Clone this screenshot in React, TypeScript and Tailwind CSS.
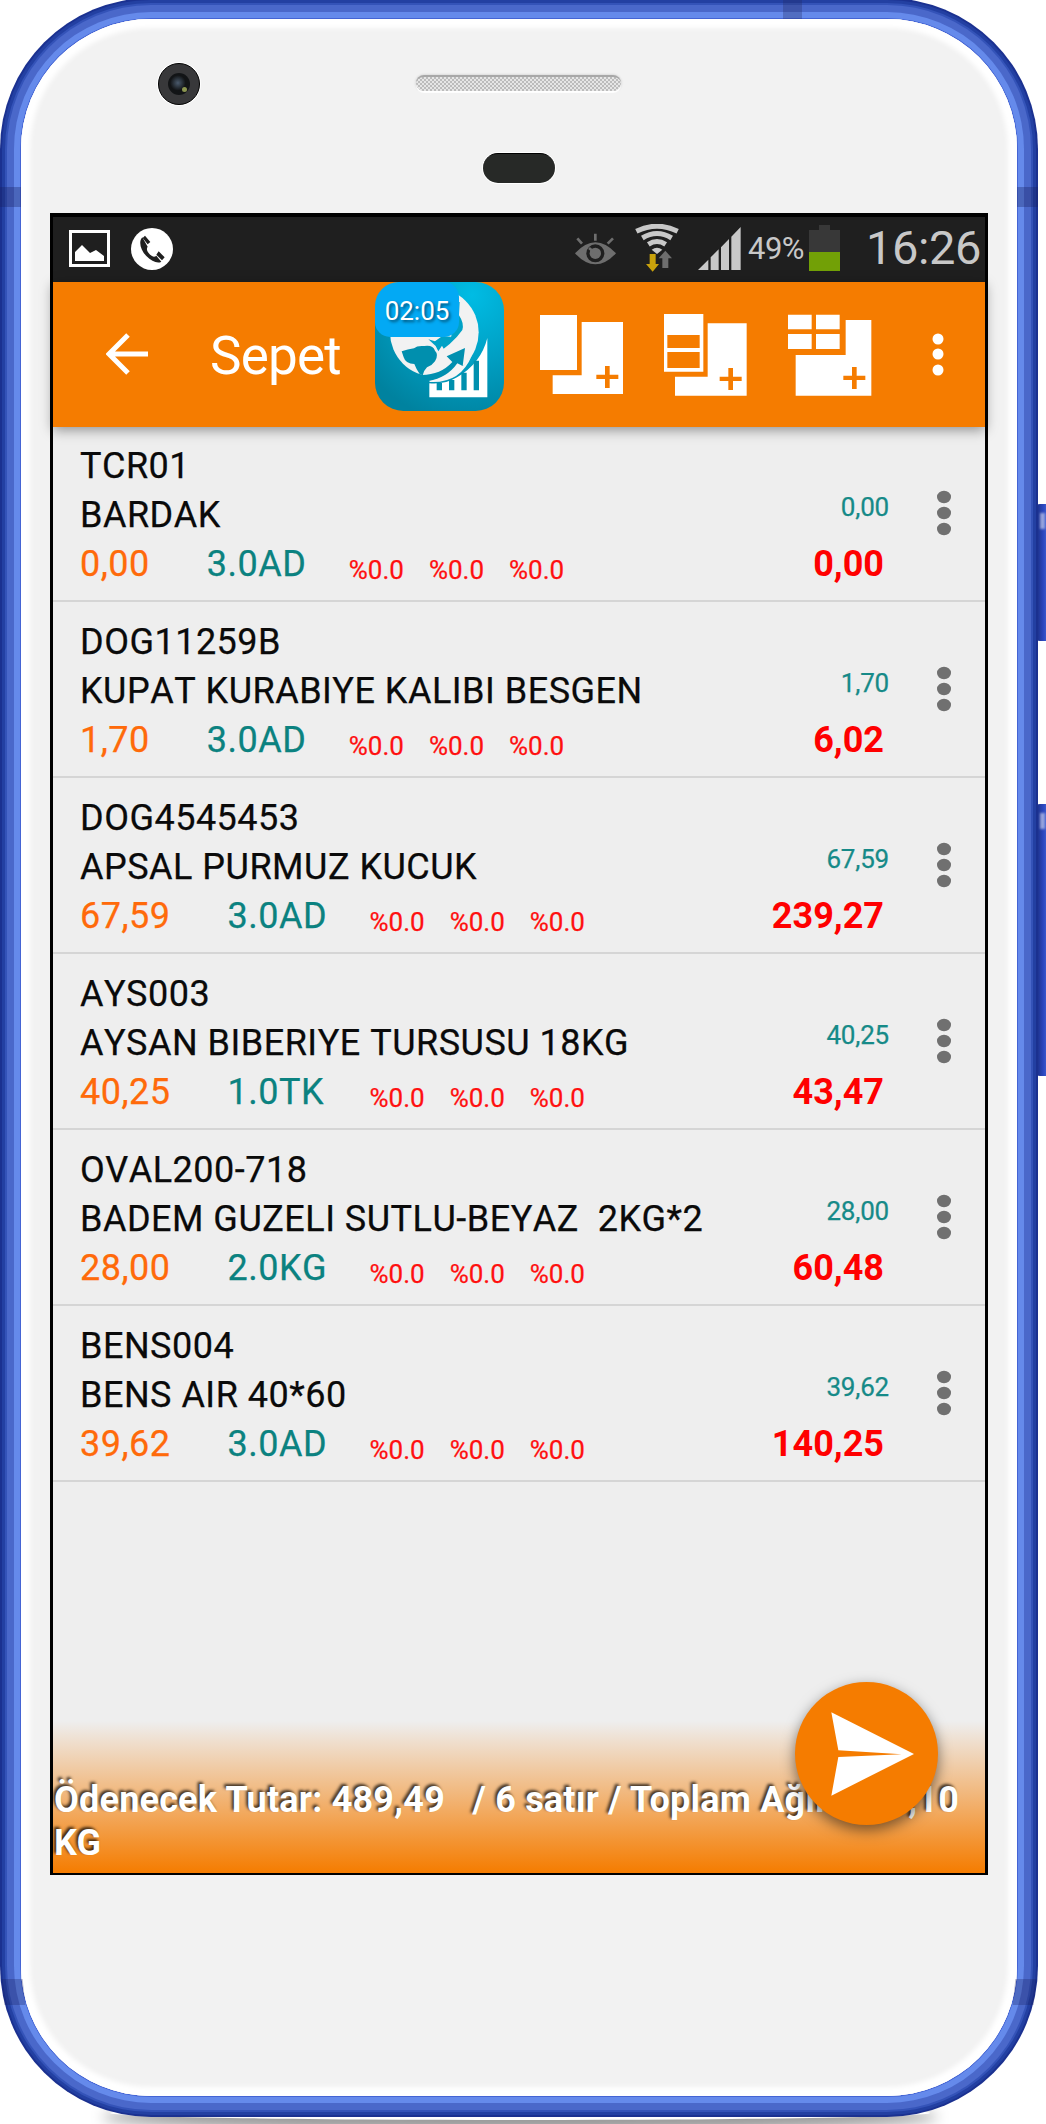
const items = [
  { code: "TCR01", name: "BARDAK", price: "0,00", qty: "3.0AD", unit: "0,00", total: "0,00" },
  { code: "DOG11259B", name: "KUPAT KURABIYE KALIBI BESGEN", price: "1,70", qty: "3.0AD", unit: "1,70", total: "6,02" },
  { code: "DOG4545453", name: "APSAL PURMUZ KUCUK", price: "67,59", qty: "3.0AD", unit: "67,59", total: "239,27" },
  { code: "AYS003", name: "AYSAN BIBERIYE TURSUSU 18KG", price: "40,25", qty: "1.0TK", unit: "40,25", total: "43,47" },
  { code: "OVAL200-718", name: "BADEM GUZELI SUTLU-BEYAZ  2KG*2", price: "28,00", qty: "2.0KG", unit: "28,00", total: "60,48" },
  { code: "BENS004", name: "BENS AIR 40*60", price: "39,62", qty: "3.0AD", unit: "39,62", total: "140,25" },
];

const StatusBar = () => (
  <div className="h-[65px] shrink-0 bg-[#1f1f1f] flex items-center pb-[3px] pl-[16px] pr-[7px] text-[#c8c8c8]">
    <svg className="w-[41px] h-[37px] mt-[1px]" viewBox="0 0 41 37">
      <rect x="1.5" y="1.5" width="38" height="34" fill="none" stroke="#fff" strokeWidth="3" />
      <path d="M6 31V22L13 15L21 23L27 20L35 26V31Z" fill="#fff" />
    </svg>
    <svg className="w-[42px] h-[42px] ml-[21px] mt-[1px]" viewBox="0 0 126 126">
      <circle cx="63" cy="63" r="63" fill="#fff" />
      <path d="M34 28C22 40 28 66 46 84C62 100 80 108 91 101L76 83C71 88 65 88 56 79C47 69 46 62 50 56Z" fill="#1f1f1f" />
      <path d="M42 23L58 42L50 49L35 30ZM83 70L101 88L93 97L76 80Z" fill="#1f1f1f" />
    </svg>
    <svg className="w-[41px] h-[32px] ml-auto mt-[2px]" viewBox="0 0 123 94">
      <path d="M0 60Q61 -6 123 60Q61 126 0 60Z" fill="#6e6e6e" />
      <circle cx="61" cy="60" r="27" fill="#1f1f1f" />
      <circle cx="61" cy="60" r="17" fill="#6e6e6e" />
      <path d="M61 60L42 44M61 1V22M7 15L21 31M114 15L98 31" stroke="#6e6e6e" strokeWidth="8" />
    </svg>
    <svg className="w-[44px] h-[48px] ml-[19px]" viewBox="0 0 132 144">
      <g fill="none" stroke="#c8c8c8" strokeWidth="15">
        <path d="M4 22Q66 -9 128 22" />
        <path d="M22 42Q66 15 110 42" />
        <path d="M40 61Q66 44 92 61" />
      </g>
      <path d="M50 77Q66 66 82 77L66 90Z" fill="#c8c8c8" />
      <path d="M44 90H62V120H72L53 143L33 120H44Z" fill="#c9a20c" />
      <path d="M82 132H100V103H111L91 80L71 103H82Z" fill="#6e6e6e" />
    </svg>
    <svg className="w-[43px] h-[43px] ml-[19px]" viewBox="0 0 129 129">
      <path d="M0 129L31 98V129ZM38 129V91L62 67V129ZM69 129V61L93 36V129ZM100 129V29L128 0V129Z" fill="#c8c8c8" />
    </svg>
    <span className="text-[31px] leading-none ml-[7px] w-[56px] tracking-[-0.5px]">49%</span>
    <svg className="w-[31px] h-[46px] ml-[5px]" viewBox="0 0 31 46">
      <path d="M0 5H10V0H21V5H31V27H0Z" fill="#383838" />
      <rect y="27" width="31" height="19" fill="#72a006" />
    </svg>
    <span className="text-[47px] leading-none ml-[26px] mt-[-1px] w-[112px] tracking-[-0.4px]">16:26</span>
  </div>
);

const AppIcon = () => (
  <svg className="w-[129px] h-[129px]" viewBox="0 0 387 387">
    <defs>
      <radialGradient id="tile" cx="0.75" cy="0.1" r="1">
        <stop offset="0" stopColor="#00bce4" />
        <stop offset="0.5" stopColor="#00a0c4" />
        <stop offset="1" stopColor="#00829f" />
      </radialGradient>
    </defs>
    <rect width="387" height="387" rx="85" fill="url(#tile)" />
    <circle cx="178" cy="151" r="133" fill="#f2f2f2" />
    <path d="M80 208Q98 202 117 199Q126 190 148 192Q174 188 180 206Q192 218 180 238Q172 250 156 256Q146 266 143 280L134 276Q124 262 118 246Q92 246 86 226Z" fill="#008fae" />
    <path d="M160 172L180 178L202 162L228 164L222 182L202 190L190 208L182 192ZM250 60H254L252 100Q268 124 262 144L246 164L224 186L206 200L200 190L228 166Z" fill="#00a2c6" />
    <path d="M160 296Q218 284 248 244L264 252L290 222Q256 304 166 300Z" fill="#f5f5f5" />
    <path d="M125 278Q192 284 232 240L215 223L270 198L263 252L247 244Q216 288 160 297Z" fill="#0090b0" />
    <path d="M163 346V304Q210 308 246 286Q318 244 337 168V346Z" fill="#fff" />
    <path d="M185 325V303H201V325ZM222 325V294H238V325ZM259 325V272H275V325ZM296 325V236H312V325Z" fill="#0090ae" />
  </svg>
);

const plus = "h26v-26h14v26h26v13h-26v27h-14v-27h-26z";

const AppBar = () => (
  <div className="relative z-10 h-[145px] shrink-0 bg-[#f57c00] text-white flex items-start pl-[53px] shadow-[0_3px_12px_rgba(0,0,0,0.4)]">
    <svg className="w-[42px] h-[42px] mt-[51px]" viewBox="0 0 42 42" fill="none" stroke="#fff" strokeWidth="5">
      <path d="M22 2L3 21L22 40M3 21H42" />
    </svg>
    <span className="text-[53px] leading-[62px] mt-[43px] ml-[62px] w-[132px] tracking-[-0.8px]">Sepet</span>
    <div className="relative ml-[33px]">
      <AppIcon />
      <span className="absolute left-0 top-0 w-[84px] h-[55px] rounded-[15px] rounded-tl-[24px] bg-[#03a9f4] text-[26px] leading-[58px] text-center [text-shadow:2px_2px_3px_rgba(0,0,0,0.5)]">
        02:05
      </span>
    </div>
    <svg className="w-[83px] h-[79px] mt-[33px] ml-[36px]" viewBox="30 329 249 237" fill="#fff">
      <path d="M30 329H141V494H30ZM155 350H279V566H68V510H155Z" />
      <path d={`M199 508${plus}`} fill="#f57c00" />
    </svg>
    <svg className="w-[83px] h-[82px] mt-[32px] ml-[41px]" viewBox="403 325 249 246" fill="#fff">
      <path d="M403 325H521V498H403ZM534 353H651V570H436V513H534Z" />
      <path d={`M413 388H510V427H413ZM413 439H510V487H413ZM570 513${plus}`} fill="#f57c00" />
    </svg>
    <svg className="w-[84px] h-[82px] mt-[32px] ml-[41px]" viewBox="775 325 252 246" fill="#fff">
      <path d="M775 327H846V371H775ZM859 327H930V371H859ZM775 385H846V430H775ZM859 385H930V430H859ZM948 343H1025V570H798V448H948Z" />
      <path d={`M941 510${plus}`} fill="#f57c00" />
    </svg>
    <svg className="w-[12px] h-[44px] mt-[50px] ml-[60px]" viewBox="0 0 12 44" fill="#fff">
      <circle cx="6" cy="7" r="5.5" />
      <circle cx="6" cy="22" r="5.5" />
      <circle cx="6" cy="38" r="5.5" />
    </svg>
  </div>
);

const CartRow = ({ item }: { item: (typeof items)[number] }) => (
  <li className="h-[176px] flex pt-[16px] pl-[27px] pr-[34px] border-b-2 border-[#d5d5d5] text-[36px] leading-[49px] [font-kerning:none]">
    <div className="flex-1 text-[#0a0a0a] whitespace-pre tracking-[0.5px] [-webkit-text-stroke:0.25px]">
      <p>{item.code}</p>
      <p>{item.name}</p>
      <div className="flex items-baseline">
        <span className="text-[#ff6a0a]">{item.price}</span>
        <span className="text-[#0b8280] ml-[57px] w-[142px]">{item.qty}</span>
        <span className="flex gap-[25px] text-[26px] text-[#ff1010] tracking-normal translate-y-[3px]">
          <span>%0.0</span>
          <span>%0.0</span>
          <span>%0.0</span>
        </span>
      </div>
    </div>
    <div className="flex flex-col items-end pt-[41px]">
      <span className="text-[26px] leading-[48px] text-[#168a88] tracking-[-0.2px] [-webkit-text-stroke:0.25px]">{item.unit}</span>
      <span className="font-bold text-[#ff0000] leading-[49px] mt-[9px] mr-[5px]">{item.total}</span>
    </div>
    <svg className="w-[14px] h-[46px] ml-[48px] mt-[48px]" viewBox="0 0 14 46" fill="#707070">
      <ellipse cx="7" cy="7" rx="7" ry="6.2" />
      <ellipse cx="7" cy="23" rx="7" ry="6.2" />
      <ellipse cx="7" cy="39" rx="7" ry="6.2" />
    </svg>
  </li>
);

const Screen = () => (
  <div className="relative w-[938px] h-[1662px] ml-[29px] border-[3px] border-t-4 border-b-2 border-black bg-[#eeeeee] flex flex-col">
    <StatusBar />
    <AppBar />
    <ul className="-mt-px">
      {items.map((item) => (
        <CartRow key={item.code} item={item} />
      ))}
    </ul>
    <div className="mt-auto h-[152px] pt-[58px] pl-px bg-linear-to-b from-[#f57c00]/0 to-[#f57c00] text-white font-bold text-[36px] leading-[43px] tracking-[0.2px] whitespace-pre-wrap [text-shadow:-2px_-2px_3px_rgba(0,0,0,0.75)]">
      Ödenecek Tutar: 489,49   / 6 satır / Toplam Ağırlık: 4,10 KG
    </div>
    <button className="absolute right-[47px] bottom-[48px] w-[143px] h-[143px] rounded-full bg-[#f57c00] shadow-[0_5px_14px_rgba(0,0,0,0.5)]">
      <svg className="w-[143px] h-[143px]" viewBox="0 0 429 429" fill="#fff">
        <path d="M109 91L357 216L109 341L130 225L320 217L130 205Z" />
      </svg>
    </button>
  </div>
);

const App = () => {
  return (
    <div
      className="relative w-[1046px] h-[2124px] overflow-hidden bg-white pt-[19px] pl-[21px]"
      style={{ fontFamily: 'Roboto, "Noto Sans", sans-serif' }}
    >
      {/* ground shadow and side buttons */}
      <div className="absolute left-[110px] top-[2106px] w-[820px] h-[14px] rounded-[50%] shadow-[0_4px_14px_8px_rgba(0,0,0,0.4)]" />
      <div className="absolute left-[1036px] top-[504px] w-[14px] h-[137px] rounded bg-linear-to-r from-[#1b2f80] via-[#2a45bd] to-[#4e6fe0]">
        <div className="w-[5px] h-[16px] mt-[9px] ml-[4px] bg-white/50 blur-[1px]" />
      </div>
      <div className="absolute left-[1036px] top-[804px] w-[14px] h-[272px] rounded bg-linear-to-r from-[#1b2f80] via-[#2a45bd] to-[#4e6fe0]">
        <div className="w-[5px] h-[16px] mt-[9px] ml-[4px] bg-white/50 blur-[1px]" />
      </div>

      <div className="relative w-[996px] h-[2077px] rounded-[130px] bg-white shadow-[0_0_0_1px_#4464d4,0_0_0_7px_#658aeb,0_0_0_14px_#4a68ca,0_0_0_16px_#3453b8,0_0_0_19px_#2340a2,0_0_0_21px_#1b3190]">
        <div className="h-full rounded-[130px] bg-[#f2f2f2] shadow-[inset_0_0_5px_9px_#fff]">
          <div className="h-[194px] grid grid-cols-3 px-[137px]">
            <div className="w-[42px] h-[42px] mt-[44px] rounded-full bg-[#38383a] border border-black ring-1 ring-white flex items-center justify-center">
              <div className="w-[22px] h-[22px] rounded-full bg-[radial-gradient(circle_at_45%_45%,#4a5a6c,#121416_45%)] flex items-end justify-end p-[3px]">
                <div className="w-[5px] h-[5px] rounded-full bg-[#8c9650]" />
              </div>
            </div>
            <div className="flex flex-col items-center">
              <div className="w-[205px] h-[16px] mt-[56px] rounded-full bg-[#d2d2d2] bg-[repeating-conic-gradient(#bcbcbc_0_25%,#e6e6e6_0_50%)] bg-[length:4px_4px] border-t-2 border-[#a8a8a8] shadow-[0_2px_1px_#fff,0_0_2px_1px_#dcdcdc]" />
              <div className="w-[72px] h-[30px] mt-[62px] rounded-full bg-[#272927] border-t border-black ring-1 ring-white" />
            </div>
          </div>
          <Screen />
        </div>
      </div>

      {/* antenna bands */}
      <div className="absolute left-[783px] top-0 w-[19px] h-[19px] bg-[#252a60]/30" />
      <div className="absolute left-0 top-[187px] w-[21px] h-[20px] bg-[#1a2260]/35" />
      <div className="absolute left-[1017px] top-[187px] w-[21px] h-[20px] bg-[#1a2260]/35" />
      <div className="absolute left-[3px] top-[1979px] w-[21px] h-[26px] skew-x-6 bg-[#1a2260]/30" />
      <div className="absolute left-[1014px] top-[1979px] w-[21px] h-[26px] -skew-x-6 bg-[#1a2260]/30" />
    </div>
  );
};

export default App;
